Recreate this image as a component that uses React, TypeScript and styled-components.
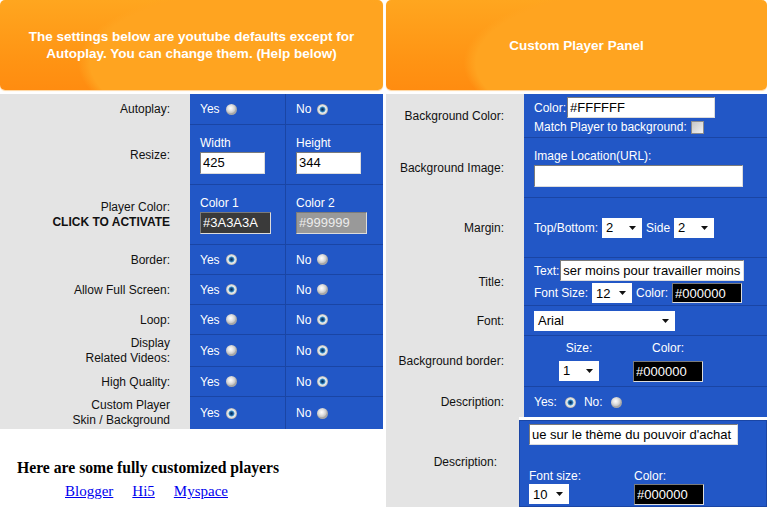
import React from "react"
import styled, { createGlobalStyle } from "styled-components"

const BLUE = "#2257c6"
const LINE = "#1a45a4"
const GREY = "#e4e4e4"

const GlobalStyle = createGlobalStyle`
	body {
		margin: 0;
		background: #fff;
		font-family: "Liberation Sans", Arial, sans-serif;
	}
`

const Page = styled.div`
	display: flex;
	gap: 3px;
	align-items: flex-start;
	width: 767px;
`

const Panel = styled.div<{ $w: number }>`
	width: ${(p) => p.$w}px;
	display: flex;
	flex-direction: column;
`

const Header = styled.div`
	height: 90px;
	margin-bottom: 4px;
	border-radius: 5px;
	display: flex;
	align-items: center;
	justify-content: center;
	text-align: center;
	color: #fff;
	font: bold 13.5px/17px "Liberation Sans", Arial, sans-serif;
	background: radial-gradient(ellipse 80% 140% at 70% 70%, #ffa420 0 58%, rgba(255, 164, 32, 0) 62%),
		linear-gradient(180deg, #ffa61f 0%, #ff9313 70%, #ff8c10 100%);
	box-shadow: 0 1px 1px #ffd59e;
`

const Row = styled.div<{ $h: number; $cols: string }>`
	display: grid;
	grid-template-columns: ${(p) => p.$cols};
	height: ${(p) => p.$h}px;
`

const Label = styled.div<{ $pad?: number }>`
	background: ${GREY};
	display: flex;
	flex-direction: column;
	justify-content: center;
	align-items: flex-end;
	text-align: right;
	padding-right: ${(p) => p.$pad ?? 20}px;
	font-size: 12px;
	line-height: 15px;
	color: #111;
`

const Strong = styled.b`
	font-weight: bold;
`

const Cell = styled.div<{ $last?: boolean; $split?: boolean; $row?: boolean }>`
	background: ${BLUE};
	border-bottom: ${(p) => (p.$last ? "none" : `1px solid ${LINE}`)};
	border-right: ${(p) => (p.$split ? `1px solid ${LINE}` : "none")};
	padding-left: 10px;
	display: flex;
	flex-direction: ${(p) => (p.$row ? "row" : "column")};
	justify-content: ${(p) => (p.$row ? "flex-start" : "center")};
	align-items: ${(p) => (p.$row ? "center" : "flex-start")};
	gap: 2px;
	color: #fff;
	font-size: 12px;
	line-height: 14px;
`

const Line = styled.div<{ $gap?: number }>`
	display: flex;
	align-items: center;
	gap: ${(p) => p.$gap ?? 3}px;
`

const Radio = styled.span<{ $on?: boolean; $ml?: number }>`
	display: inline-block;
	width: 11px;
	height: 11px;
	margin-left: ${(p) => p.$ml ?? 4}px;
	border-radius: 50%;
	flex: none;
	background: ${(p) =>
		p.$on
			? "radial-gradient(circle at 50% 50%, #0a2a52 0, #1b5c98 1.8px, #62b3e2 2.8px, #f2f2f2 3.4px, #d4d4d4 4.6px, #a9a9a9 5.5px)"
			: "radial-gradient(circle at 42% 38%, #ffffff 0, #e6e6e6 2.5px, #c7c7c7 4.6px, #a6a6a6 5.5px)"};
`

const Spaced = styled.span`
	margin-left: 6px;
`

const Check = styled.span`
	display: inline-block;
	width: 11px;
	height: 11px;
	border: 1px solid #8c8c8c;
	background: linear-gradient(135deg, #c6c6c6, #f3f3f3);
`

const Field = styled.input<{ $w: number; $bg?: string; $fg?: string; $h?: number }>`
	box-sizing: border-box;
	width: ${(p) => p.$w}px;
	height: ${(p) => p.$h ?? 21}px;
	margin: 0;
	padding: 0 2px;
	border: 1px solid;
	border-color: #7b7b7b #dcdcdc #dcdcdc #7b7b7b;
	background: ${(p) => p.$bg ?? "#fff"};
	color: ${(p) => p.$fg ?? "#000"};
	font: 13px "Liberation Sans", Arial, sans-serif;
	outline: none;
`

const SelectBox = styled.span<{ $w: number }>`
	box-sizing: border-box;
	width: ${(p) => p.$w}px;
	height: 20px;
	background: #fff;
	color: #000;
	display: inline-flex;
	align-items: center;
	justify-content: space-between;
	padding: 0 6px 0 4px;
	font: 13px "Liberation Sans", Arial, sans-serif;
`

const Select = ({ value, w }: { value: string; w: number }) => (
	<SelectBox $w={w}>
		{value}
		<svg width="7" height="4" viewBox="0 0 7 4">
			<path d="M0 0h7L3.5 4z" fill="#111" />
		</svg>
	</SelectBox>
)

const Pair = styled.div`
	display: grid;
	grid-template-columns: 90px 88px;
	justify-items: center;
	row-gap: 6px;
	color: #fff;
`

const DescBox = styled.div`
	margin-top: 3px;
	border: 1px solid ${LINE};
	background: ${BLUE};
	padding: 3px 0 0 9px;
	display: flex;
	flex-direction: column;
	color: #fff;
	font-size: 12px;
	line-height: 14px;
`

const DescGrid = styled.div`
	margin-top: 24px;
	display: grid;
	grid-template-columns: 105px auto;
	justify-content: start;
	row-gap: 1px;
`

const Footer = styled.div`
	padding: 29px 0 0 17px;
	font-family: "Liberation Serif", "Times New Roman", serif;
`

const FooterTitle = styled.div`
	font-weight: bold;
	font-size: 15.7px;
	line-height: 20px;
`

const Links = styled.div`
	display: flex;
	gap: 19px;
	padding-left: 48px;
	margin-top: 4px;
	font-size: 15px;
	line-height: 18px;
`

const Link = styled.a`
	color: #0000ee;
	text-decoration: underline;
`

const LCOLS = "190px 96px 1fr"
const RCOLS = "138px 1fr"

const YesNo = ({ h, label, yes, last }: { h: number; label: React.ReactNode; yes: boolean; last?: boolean }) => (
	<Row $h={h} $cols={LCOLS}>
		<Label>{label}</Label>
		<Cell $row $split $last={last}>
			Yes <Radio $on={yes} />
		</Cell>
		<Cell $row $last={last}>
			No <Radio $on={!yes} />
		</Cell>
	</Row>
)

export default function App() {
	return (
		<>
			<GlobalStyle />
			<Page>
				<Panel $w={383}>
					<Header>
						The settings below are youtube defaults except for
						<br />
						Autoplay. You can change them. (Help below)
					</Header>
					<YesNo h={31} label="Autoplay:" yes={false} />
					<Row $h={60} $cols={LCOLS}>
						<Label>Resize:</Label>
						<Cell $split>
							Width
							<Field $w={65} $h={22} readOnly value="425" />
						</Cell>
						<Cell>
							Height
							<Field $w={65} $h={22} readOnly value="344" />
						</Cell>
					</Row>
					<Row $h={60} $cols={LCOLS}>
						<Label>
							Player Color:
							<Strong>CLICK TO ACTIVATE</Strong>
						</Label>
						<Cell $split>
							Color 1
							<Field $w={71} $h={22} $bg="#3a3a3a" $fg="#fff" readOnly value="#3A3A3A" />
						</Cell>
						<Cell>
							Color 2
							<Field $w={71} $h={22} $bg="#999999" $fg="#ececec" readOnly value="#999999" />
						</Cell>
					</Row>
					<YesNo h={30} label="Border:" yes />
					<YesNo h={30} label="Allow Full Screen:" yes />
					<YesNo h={30} label="Loop:" yes={false} />
					<YesNo
						h={32}
						label={
							<>
								Display
								<span>Related Videos:</span>
							</>
						}
						yes={false}
					/>
					<YesNo h={30} label="High Quality:" yes={false} />
					<YesNo
						h={32}
						last
						label={
							<>
								Custom Player
								<span>Skin / Background</span>
							</>
						}
						yes
					/>
					<Footer>
						<FooterTitle>Here are some fully customized players</FooterTitle>
						<Links>
							<Link href="#">Blogger</Link>
							<Link href="#">Hi5</Link>
							<Link href="#">Myspace</Link>
						</Links>
					</Footer>
				</Panel>

				<Panel $w={381}>
					<Header>Custom Player Panel</Header>
					<Row $h={44} $cols={RCOLS}>
						<Label>Background Color:</Label>
						<Cell>
							<Line $gap={1}>
								Color: <Field $w={148} readOnly value="#FFFFFF" />
							</Line>
							<Line $gap={4}>
								Match Player to background: <Check />
							</Line>
						</Cell>
					</Row>
					<Row $h={60} $cols={RCOLS}>
						<Label>Background Image:</Label>
						<Cell>
							Image Location(URL):
							<Field $w={209} $h={22} readOnly value="" />
						</Cell>
					</Row>
					<Row $h={60} $cols={RCOLS}>
						<Label>Margin:</Label>
						<Cell>
							<Line $gap={4}>
								Top/Bottom: <Select value="2" w={40} /> Side <Select value="2" w={40} />
							</Line>
						</Cell>
					</Row>
					<Row $h={48} $cols={RCOLS}>
						<Label>Title:</Label>
						<Cell>
							<Line $gap={1}>
								Text:
								<Field $w={184} readOnly value="ser moins pour travailler moins" />
							</Line>
							<Line $gap={4}>
								Font Size: <Select value="12" w={40} /> Color:
								<Field $w={70} $h={20} $bg="#000" $fg="#fff" readOnly value="#000000" />
							</Line>
						</Cell>
					</Row>
					<Row $h={30} $cols={RCOLS}>
						<Label>Font:</Label>
						<Cell>
							<Select value="Arial" w={141} />
						</Cell>
					</Row>
					<Row $h={51} $cols={RCOLS}>
						<Label>Background border:</Label>
						<Cell>
							<Pair>
								<span>Size:</span>
								<span>Color:</span>
								<Select value="1" w={40} />
								<Field $w={70} $bg="#000" $fg="#fff" readOnly value="#000000" />
							</Pair>
						</Cell>
					</Row>
					<Row $h={30} $cols={RCOLS}>
						<Label>Description:</Label>
						<Cell $row $last>
							Yes: <Radio $on $ml={6} />
							<Spaced>No:</Spaced> <Radio $ml={6} />
						</Cell>
					</Row>

					<Row $h={90} $cols="133px 1fr">
						<Label $pad={22}>Description:</Label>
						<DescBox>
							<Field $w={209} readOnly value="ue sur le thème du pouvoir d'achat" />
							<DescGrid>
								<span>Font size:</span>
								<span>Color:</span>
								<Select value="10" w={40} />
								<Field $w={70} $bg="#000" $fg="#fff" readOnly value="#000000" />
							</DescGrid>
						</DescBox>
					</Row>
				</Panel>
			</Page>
		</>
	)
}
